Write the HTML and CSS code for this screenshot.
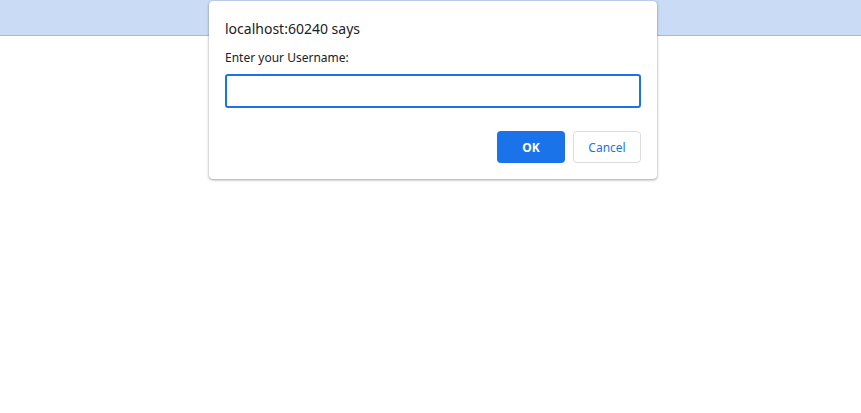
FILE: index.html
```html
<!DOCTYPE html>
<html>
<head>
<meta charset="utf-8">
<link rel="stylesheet" href="styles.css">
</head>
<body>
<div class="topbar"></div>
<div class="dialog">
  <div class="title">localhost:60240 says</div>
  <div class="label">Enter your Username:</div>
  <div class="input"></div>
  <div class="actions">
    <button class="btn ok">OK</button>
    <button class="btn cancel">Cancel</button>
  </div>
</div>
</body>
</html>
```
FILE: styles.css
```css
html, body {
  margin: 0;
  padding: 0;
  background: #fff;
  font-family: "Noto Sans", "Open Sans", sans-serif;
}
.topbar {
  height: 35px;
  background: #cadcf5;
  border-bottom: 1px solid #a9b8d0;
}
.dialog {
  position: absolute;
  left: 209px;
  top: 1px;
  width: 448px;
  height: 178px;
  box-sizing: border-box;
  background: #fff;
  border-radius: 4px;
  box-shadow: 0 1px 3px rgba(0,0,0,0.35), 0 0 1px rgba(0,0,0,0.25);
  padding: 18px 16px 0 16px;
}
.title {
  font-size: 14px;
  color: #202124;
  line-height: 20px;
  height: 22px;
}
.label {
  font-size: 12px;
  color: #202124;
  line-height: 16px;
  margin-top: 9px;
}
.input {
  margin-top: 8px;
  height: 34px;
  box-sizing: border-box;
  border: 2px solid #1a73e8;
  border-radius: 3px;
}
.actions {
  display: flex;
  justify-content: flex-end;
  gap: 8px;
  margin-top: 23px;
}
.btn {
  width: 68px;
  height: 32px;
  box-sizing: border-box;
  border-radius: 4px;
  font-family: "Noto Sans", "Open Sans", sans-serif;
  font-size: 12px;
  padding: 0;
}
.ok {
  background: #1a73e8;
  border: none;
  color: #fff;
  font-weight: bold;
}
.cancel {
  background: #fff;
  border: 1px solid #dadce0;
  color: #1a73e8;
}
```
